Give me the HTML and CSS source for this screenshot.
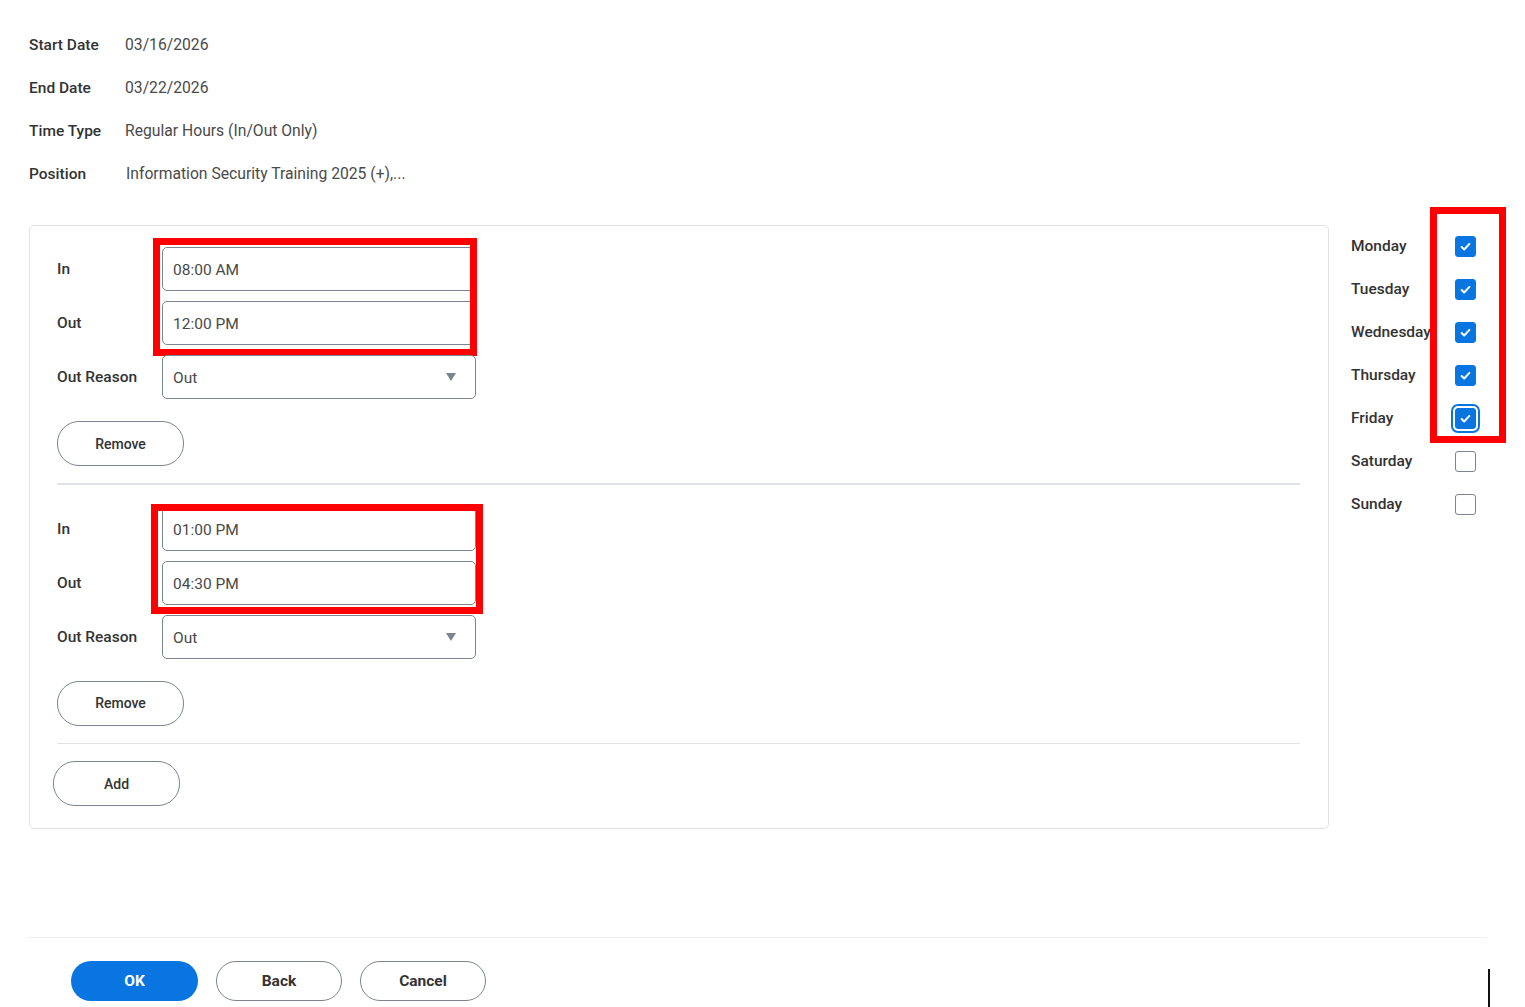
FILE: index.html
```html
<!DOCTYPE html>
<html>
<head>
<meta charset="utf-8">
<link rel="stylesheet" href="styles.css">
</head>
<body>
<div class="page">
  <div class="summary">
    <div class="s-label">Start Date</div><div class="s-value">03/16/2026</div>
    <div class="s-label">End Date</div><div class="s-value">03/22/2026</div>
    <div class="s-label">Time Type</div><div class="s-value">Regular Hours (In/Out Only)</div>
    <div class="s-label">Position</div><div class="s-value pos">Information Security Training 2025 (+),...</div>
  </div>

  <div class="content">
    <div class="panel">
      <div class="entry">
        <div class="times">
          <div class="field"><div class="f-label">In</div><div class="input">08:00 AM</div></div>
          <div class="field"><div class="f-label">Out</div><div class="input">12:00 PM</div></div>
          <div class="redbox rb1"></div>
        </div>
        <div class="field"><div class="f-label">Out Reason</div><div class="input select">Out<span class="caret"></span></div></div>
        <button class="btn btn-sec btn-small">Remove</button>
      </div>
      <div class="divider"></div>
      <div class="entry">
        <div class="times">
          <div class="field"><div class="f-label">In</div><div class="input">01:00 PM</div></div>
          <div class="field"><div class="f-label">Out</div><div class="input">04:30 PM</div></div>
          <div class="redbox rb2"></div>
        </div>
        <div class="field"><div class="f-label">Out Reason</div><div class="input select">Out<span class="caret"></span></div></div>
        <button class="btn btn-sec btn-small">Remove</button>
      </div>
      <div class="divider last"></div>
      <button class="btn btn-sec btn-small add">Add</button>
    </div>

    <div class="days">
      <div class="day"><span class="d-label">Monday</span><span class="cb on"><svg viewBox="0 0 22 22"><path d="M6.5 11.5l3 3 6-6.5" /></svg></span></div>
      <div class="day"><span class="d-label">Tuesday</span><span class="cb on"><svg viewBox="0 0 22 22"><path d="M6.5 11.5l3 3 6-6.5" /></svg></span></div>
      <div class="day"><span class="d-label">Wednesday</span><span class="cb on"><svg viewBox="0 0 22 22"><path d="M6.5 11.5l3 3 6-6.5" /></svg></span></div>
      <div class="day"><span class="d-label">Thursday</span><span class="cb on"><svg viewBox="0 0 22 22"><path d="M6.5 11.5l3 3 6-6.5" /></svg></span></div>
      <div class="day"><span class="d-label">Friday</span><span class="cb on focus"><svg viewBox="0 0 22 22"><path d="M6.5 11.5l3 3 6-6.5" /></svg></span></div>
      <div class="day"><span class="d-label">Saturday</span><span class="cb"></span></div>
      <div class="day"><span class="d-label">Sunday</span><span class="cb"></span></div>
      <div class="redbox rb3"></div>
    </div>
  </div>

  <div class="footer">
    <button class="btn btn-primary">OK</button>
    <button class="btn btn-sec">Back</button>
    <button class="btn btn-sec">Cancel</button>
  </div>
  <div class="cursor"></div>
</div>
</body>
</html>
```

FILE: styles.css
```css
* { box-sizing: border-box; }
html, body { margin: 0; padding: 0; background: #fff; }
body {
  font-family: Roboto, "Noto Sans", "Liberation Sans", sans-serif;
  color: #333;
  width: 1525px;
  height: 1007px;
  overflow: hidden;
}
.page { position: relative; height: 1007px; }

.summary {
  display: grid;
  grid-template-columns: 96px auto;
  grid-auto-rows: 43px;
  align-items: center;
  padding: 23px 0 0 29px;
}
.s-label { font-size: 15.5px; font-weight: 500; color: #333; }
.s-value { font-size: 15.7px; color: #4a4a4a; }
.s-value.pos { padding-left: 1px; }

.content {
  display: flex;
  align-items: flex-start;
  margin-top: 30px;
  padding-left: 29px;
}
.panel {
  width: 1300px;
  border: 1.5px solid #dfe2e6;
  border-radius: 5px;
  padding: 21px 28px 22px 27px;
}
.entry { display: flex; flex-direction: column; }
.times { position: relative; display: flex; flex-direction: column; gap: 10px; margin-bottom: 10px; }
.field { display: flex; align-items: center; }
.f-label { width: 105px; font-size: 15.5px; font-weight: 500; color: #333; }
.input {
  width: 314px;
  height: 44px;
  border: 1.5px solid #7b858f;
  border-radius: 5px;
  padding: 2px 10px 0;
  display: flex;
  align-items: center;
  font-size: 15.5px;
  color: #4a4a4a;
  position: relative;
}
.select .caret {
  position: absolute;
  right: 19px;
  top: 17px;
  width: 0; height: 0;
  border-left: 5.5px solid transparent;
  border-right: 5.5px solid transparent;
  border-top: 8px solid #7b858f;
}

.btn {
  font-family: Roboto, "Noto Sans", "Liberation Sans", sans-serif;
  height: 40px;
  width: 126px;
  border-radius: 22px;
  font-size: 15.5px;
  font-weight: 700;
  cursor: pointer;
  padding: 0;
}
.btn-small { width: 127px; height: 45px; font-size: 14px; font-weight: 500; margin-top: 22px; }
.btn-sec { background: #fff; border: 1.5px solid #7b858f; color: #333; }
.btn-primary { background: #0875e1; border: none; color: #fff; width: 127px; }

.divider { height: 1.5px; background: #dfe2e6; margin: 17px 0 22px; }
.divider.last { margin-bottom: 0; }
.add { margin-left: -4px; margin-top: 17px; }

.redbox { position: absolute; border: 7px solid #ff0000; pointer-events: none; }
.rb1 { left: 96px; top: -9px; width: 324px; height: 118px; }
.rb2 { left: 94px; top: -3px; width: 332px; height: 110px; }

.days {
  position: relative;
  margin-left: 22px;
  margin-top: -0.5px;
  display: flex;
  flex-direction: column;
}
.day { display: flex; align-items: center; height: 43px; }
.d-label { width: 104px; font-size: 15.5px; font-weight: 500; color: #333; white-space: nowrap; }
.cb {
  width: 21px; height: 21px;
  border: 1.5px solid #7b858f;
  border-radius: 3px;
  background: #fff;
  display: inline-flex;
}
.cb.on { background: #0875e1; border-color: #0875e1; }
.cb svg { width: 100%; height: 100%; }
.cb svg path { fill: none; stroke: #fff; stroke-width: 2.3; stroke-linecap: round; stroke-linejoin: round; }
.cb.focus { box-shadow: 0 0 0 2px #fff, 0 0 0 4px #0875e1; }
.rb3 { left: 79px; top: -18px; width: 76px; height: 236px; }

.footer {
  position: absolute;
  left: 27px;
  top: 937px;
  width: 1460px;
  border-top: 1.5px solid #eceef0;
  padding: 23px 0 0 44px;
  display: flex;
  gap: 18px;
}
.cursor {
  position: absolute;
  left: 1488px;
  top: 969px;
  width: 2px;
  height: 38px;
  background: #111;
}
```
